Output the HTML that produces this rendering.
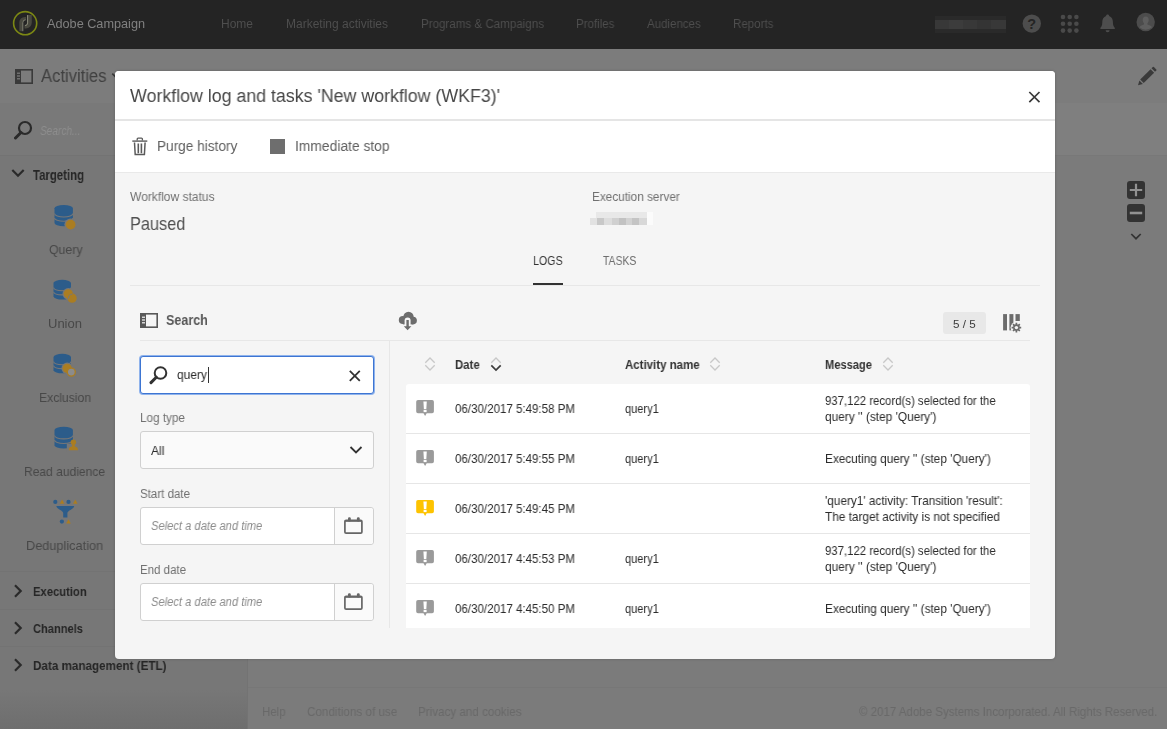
<!DOCTYPE html>
<html lang="en">
<head>
<meta charset="utf-8">
<title>Adobe Campaign</title>
<style>
*{box-sizing:border-box;margin:0;padding:0}
html,body{width:1167px;height:729px;overflow:hidden}
body{font-family:"Liberation Sans",sans-serif;background:#7d7d7d;position:relative;color:#323232}
.abs{position:absolute}
/* top nav */
#nav{position:absolute;left:0;top:0;width:1167px;height:49px;background:#242424}
/* background page */
#hdr{position:absolute;left:0;top:49px;width:1167px;height:54px;background:#7c7c7c}
#side{position:absolute;left:0;top:103px;width:248px;height:626px;background:linear-gradient(#777 0,#777 587px,#6e6e6e 626px);border-right:1px solid #737373}
#sidesearch{position:absolute;left:0;top:103px;width:247px;height:53px;background:#797979;border-bottom:1px solid #737373}
#main{position:absolute;left:248px;top:103px;width:919px;height:626px;background:#7b7b7b}
#mainbar{position:absolute;left:248px;top:103px;width:919px;height:53px;background:#7f7f7f;border-bottom:1px solid #787878}
#foot{position:absolute;left:248px;top:687px;width:919px;height:42px;background:#7b7b7b;border-top:1px solid #777}
/* modal */
#modal{position:absolute;left:115px;top:71px;width:940px;height:588px;background:#f5f5f5;border-radius:4px;overflow:hidden;box-shadow:0 0 3px rgba(0,0,0,.22)}
#mh{position:absolute;left:0;top:0;width:940px;height:50px;background:#fff;border-bottom:2px solid #e5e5e5}
#mt{position:absolute;left:0;top:50px;width:940px;height:52px;background:#fff;border-bottom:1px solid #e9e9e9}
.inp{position:absolute;background:#fff;border:1px solid #d0d0d0;border-radius:3px}
.x{position:absolute;white-space:nowrap;line-height:1;transform-origin:0 50%;will-change:transform}
</style>
</head>
<body>
<div id="hdr"></div>
<div id="side"></div>
<div id="sidesearch"></div>
<div id="main"></div>
<div id="mainbar"></div>
<div id="foot"></div>

<div id="nav">
  <svg class="abs" style="left:12px;top:10px" width="27" height="27" viewBox="12 10 27 27"><circle cx="25.150" cy="23.200" r="11.550" fill="none" stroke="#7c8814" stroke-width="1.600"/><path d="M19.300 31.200V22.500a5.500 5.500 0 0 1 5.500-5.500h1.200v2.800h-.8a2.700 2.700 0 0 0-2.700 2.700v8.700z" fill="#48483f"/><path d="M22.800 31.200V22.600a2.800 2.800 0 0 1 2.800-2.800" fill="none" stroke="#8a8a7a" stroke-width=".9"/><path d="M27 15.100h4.800v7.400a6 6 0 0 1-6 6h-1.300v-2.900h.6a2 2 0 0 0 1.900-2z" fill="#48483f"/><path d="M27.600 15.100v7.800a2.700 2.700 0 0 1-2.700 2.700" fill="none" stroke="#8a8a7a" stroke-width="1"/></svg>
  <div class="abs" style="left:935px;top:16px;width:71px;height:17px;background:#2a2a2a"></div>
  <div class="abs" style="left:935px;top:20px;width:71px;height:9px;background:#383838"></div>
  <div class="abs" style="left:949px;top:20px;width:14px;height:9px;background:#3c3c3c"></div>
  <div class="abs" style="left:977px;top:20px;width:14px;height:9px;background:#343434"></div>
  <svg class="abs" style="left:1022px;top:14px" width="20" height="20" viewBox="0 0 20 20"><circle cx="9.800" cy="9.600" r="9.200" fill="#4d4d4d"/><text x="9.800" y="14.800" font-family="Liberation Sans, sans-serif" font-weight="bold" font-size="14.500" text-anchor="middle" fill="#242424">?</text></svg>
  <svg class="abs" style="left:1060px;top:14px" width="20" height="20" viewBox="0 0 20 20" fill="#4a4a4a"><circle cx="3" cy="3" r="2.300"/><circle cx="9.700" cy="3" r="2.300"/><circle cx="16.400" cy="3" r="2.300"/><circle cx="3" cy="9.800" r="2.300"/><circle cx="9.700" cy="9.800" r="2.300"/><circle cx="16.400" cy="9.800" r="2.300"/><circle cx="3" cy="16.600" r="2.300"/><circle cx="9.700" cy="16.600" r="2.300"/><circle cx="16.400" cy="16.600" r="2.300"/></svg>
  <svg class="abs" style="left:1099px;top:14px" width="18" height="20" viewBox="0 0 18 20" fill="#4d4d4d"><path d="M8.600 .6c-.9 0-1.500.6-1.500 1.400C4.500 2.800 3.300 5.200 3.300 8c0 3.500-.9 4.800-1.900 5.800v1.200h14.400v-1.200c-1-1-1.900-2.300-1.900-5.800 0-2.800-1.200-5.200-3.800-6C10.100 1.200 9.500 .6 8.600 .6z"/><path d="M6.600 16.300a2 2 0 0 0 4 0z"/></svg>
  <svg class="abs" style="left:1136px;top:12px" width="20" height="20" viewBox="0 0 20 20"><circle cx="9.700" cy="10" r="9.200" fill="#4c4c4c"/><path d="M9.700 4.500c2 0 3 1.500 3 3.500 0 1.500-.6 2.600-1.300 3.300v1.200c1.800.5 3.800 1.300 4.600 2.800a9.200 9.200 0 0 1-12.600 0c.8-1.500 2.800-2.300 4.600-2.800v-1.200C7.300 10.600 6.700 9.500 6.700 8c0-2 1-3.500 3-3.500z" fill="#5e5e5e"/></svg>
  <div class="x" style="left:47.0px;top:18.0px;font-size:12.7px;color:#808080;transform:scaleX(0.9995)">Adobe Campaign</div>
  <div class="x" style="left:221.3px;top:18.0px;font-size:12px;color:#4e4e4e;transform:scaleX(0.9995)">Home</div>
  <div class="x" style="left:286.1px;top:18.0px;font-size:12px;color:#4e4e4e;transform:scaleX(0.9976)">Marketing activities</div>
  <div class="x" style="left:420.6px;top:18.0px;font-size:12px;color:#4e4e4e;transform:scaleX(0.9655)">Programs &amp; Campaigns</div>
  <div class="x" style="left:576.2px;top:18.0px;font-size:12px;color:#4e4e4e;transform:scaleX(0.9596)">Profiles</div>
  <div class="x" style="left:646.8px;top:18.0px;font-size:12px;color:#4e4e4e;transform:scaleX(0.9599)">Audiences</div>
  <div class="x" style="left:733.2px;top:18.0px;font-size:12px;color:#4e4e4e;transform:scaleX(0.9612)">Reports</div>
</div>

<!-- background left panel -->
<svg class="abs" style="left:15px;top:68.500px" width="18" height="15" viewBox="0 0 18 15"><rect x=".8" y=".8" width="16.400" height="13.400" fill="none" stroke="#3a3a3a" stroke-width="1.600"/><rect x="1" y="1" width="5" height="13" fill="#3a3a3a"/><rect x="2" y="3.600" width="3" height="1.200" fill="#7e7e7e"/><rect x="2" y="6.400" width="3" height="1.200" fill="#7e7e7e"/><rect x="2" y="9.200" width="3" height="1.200" fill="#7e7e7e"/></svg>
<svg class="abs" style="left:1137px;top:66px" width="20" height="20" viewBox="1137 66 20 20" fill="#3a3a3a"><path d="M1138 85.300l1.400-4.800 3.400 3.400z"/><path d="M1140.200 79.600l10.400-10.400 3.500 3.500-10.400 10.400z"/><path d="M1151.500 68.300l1.300-1.300a.8.800 0 0 1 1.100 0l2.400 2.400a.8.800 0 0 1 0 1.100l-1.300 1.300z"/></svg>
<svg class="abs" style="left:14px;top:120px" width="20" height="20" viewBox="0 0 20 20"><circle cx="11" cy="8" r="6" fill="none" stroke="#2a2a2a" stroke-width="2.200"/><path d="M7 12.500L1.500 18" stroke="#2a2a2a" stroke-width="3" stroke-linecap="round"/></svg>

<!--SIDEICONS--><svg class="abs" style="left:0;top:0" width="248" height="729" viewBox="0 0 248 729"><path d="M54.5 208.3a9.2 3.4 0 0 1 18.4 0v14.6a9.2 3.4 0 0 1 -18.4 0z" fill="#2c5c8a"/><path d="M54.5 213.6a9.2 3.4 0 0 0 18.4 0" fill="none" stroke="#777777" stroke-width="1.1"/><path d="M54.5 217.9a9.2 3.4 0 0 0 18.4 0" fill="none" stroke="#777777" stroke-width="1.1"/><circle cx="70.6" cy="224.6" r="6.2" fill="#777777"/><circle cx="70.600" cy="224.600" r="4.900" fill="#aa7d22"/><path d="M53.5 282.8a8.8 3.4 0 0 1 17.5 0v13.7a8.8 3.4 0 0 1 -17.5 0z" fill="#2c5c8a"/><path d="M53.5 287.7a8.8 3.4 0 0 0 17.5 0" fill="none" stroke="#777777" stroke-width="1.1"/><path d="M53.5 291.8a8.8 3.4 0 0 0 17.5 0" fill="none" stroke="#777777" stroke-width="1.1"/><circle cx="68.300" cy="293.800" r="5.800" fill="#777777"/><circle cx="72.100" cy="298.200" r="5.800" fill="#777777"/><circle cx="68.300" cy="293.800" r="4.600" fill="#aa7d22"/><circle cx="72.100" cy="298.200" r="4.600" fill="#aa7d22"/><path d="M68.500 298.500a4.500 4.500 0 0 1 4-4.500" fill="none" stroke="#777777" stroke-width="1"/><path d="M53.5 356.9a8.8 3.4 0 0 1 17.5 0v13.4a8.8 3.4 0 0 1 -17.5 0z" fill="#2c5c8a"/><path d="M53.5 361.7a8.8 3.4 0 0 0 17.5 0" fill="none" stroke="#777777" stroke-width="1.1"/><path d="M53.5 365.7a8.8 3.4 0 0 0 17.5 0" fill="none" stroke="#777777" stroke-width="1.1"/><circle cx="67.200" cy="368.300" r="5.800" fill="#777777"/><circle cx="71.300" cy="372.100" r="5.800" fill="#777777"/><circle cx="67.200" cy="368.300" r="4.600" fill="#aa7d22"/><circle cx="71.300" cy="372.100" r="4" fill="#8c8c8c" stroke="#aa7d22" stroke-width="1.300"/><path d="M54.5 430.1a9.2 3.4 0 0 1 18.4 0v15.1a9.2 3.4 0 0 1 -18.4 0z" fill="#2c5c8a"/><path d="M54.5 435.5a9.2 3.4 0 0 0 18.4 0" fill="none" stroke="#777777" stroke-width="1.1"/><path d="M54.5 440.1a9.2 3.4 0 0 0 18.4 0" fill="none" stroke="#777777" stroke-width="1.1"/><path d="M66.800 452v-8.500h12.700v8.500z" fill="#777777"/><circle cx="73.400" cy="442.300" r="2.700" fill="#aa7d22"/><path d="M72.300 444h2.200l.5 2.600c2 .3 3 1.400 3 3.700h-9.200c0-2.300 1-3.400 3-3.700z" fill="#aa7d22"/><circle cx="55.300" cy="501.900" r="2.100" fill="#2c5c8a"/><path d="M59.8 503.7L62.1 499.6L64.4 503.7z" fill="#aa7d22"/><circle cx="68.500" cy="501.900" r="2.100" fill="#2c5c8a"/><path d="M73.0 503.7L75.3 499.6L77.6 503.7z" fill="#aa7d22"/><path d="M56.400 506h17.800c0 3-6.800 4.500-6.800 7v4.500h-4.200v-4.500c0-2.500-6.800-4-6.800-7z" fill="#2c5c8a"/><circle cx="61.900" cy="521.600" r="2.100" fill="#2c5c8a"/><path d="M66.2 523.4L68.5 519.3L70.8 523.4z" fill="#aa7d22"/></svg><!--/SIDEICONS-->
<svg class="abs" style="left:11px;top:168px" width="14" height="10" viewBox="0 0 14 10"><path d="M1.300 2l5.700 5.700L12.700 2" fill="none" stroke="#2a2a2a" stroke-width="2.200"/></svg>
<div class="abs" style="left:0;top:571px;width:248px;height:1px;background:#737373"></div>
<div class="abs" style="left:0;top:609px;width:248px;height:1px;background:#737373"></div>
<div class="abs" style="left:0;top:646px;width:248px;height:1px;background:#737373"></div>
<svg class="abs" style="left:13px;top:584px" width="10" height="14" viewBox="0 0 10 14"><path d="M2 1.300l5.700 5.700L2 12.700" fill="none" stroke="#2a2a2a" stroke-width="2.200"/></svg>
<svg class="abs" style="left:13px;top:621px" width="10" height="14" viewBox="0 0 10 14"><path d="M2 1.300l5.700 5.700L2 12.700" fill="none" stroke="#2a2a2a" stroke-width="2.200"/></svg>
<svg class="abs" style="left:13px;top:658px" width="10" height="14" viewBox="0 0 10 14"><path d="M2 1.300l5.700 5.700L2 12.700" fill="none" stroke="#2a2a2a" stroke-width="2.200"/></svg>


<!-- zoom buttons -->
<svg class="abs" style="left:1126px;top:180px" width="20" height="68" viewBox="0 0 20 68"><rect x="1" y="1" width="18" height="18" rx="3" fill="#333"/><path d="M10 3.800v12.400M3.800 10h12.400" stroke="#929292" stroke-width="2.200"/><rect x="1" y="24" width="18" height="18" rx="3" fill="#333"/><path d="M3.800 33h12.400" stroke="#929292" stroke-width="2.600"/><path d="M5.300 54l4.700 4.700 4.700-4.700" fill="none" stroke="#333" stroke-width="1.700"/></svg>

<svg class="abs" style="left:110px;top:70px" width="14" height="12" viewBox="110 70 14 12"><path d="M112.300 73.600l4.500 4.500 4.500-4.500" fill="none" stroke="#3a3a3a" stroke-width="1.700"/></svg>
<div class="x" style="left:41.2px;top:68.0px;font-size:17.5px;color:#404040;transform:scaleX(0.9486)">Activities</div>
<div class="x" style="left:499.5px;top:69.0px;font-size:18px;color:#404040;transform:scaleX(1.0280)">New workflow (WKF3)</div>
<div class="x" style="left:40.2px;top:125.0px;font-size:12.5px;color:#8e8e8e;font-style:italic;transform:scaleX(0.8075)">Search...</div>
<div class="x" style="left:32.5px;top:169.0px;font-size:13.8px;color:#262626;font-weight:bold;transform:scaleX(0.8247)">Targeting</div>
<div class="x" style="left:48.7px;top:243.0px;font-size:13px;color:#484848;transform:scaleX(0.9490)">Query</div>
<div class="x" style="left:47.7px;top:317.0px;font-size:13px;color:#484848;transform:scaleX(0.9921)">Union</div>
<div class="x" style="left:38.7px;top:391.0px;font-size:13px;color:#484848;transform:scaleX(0.9346)">Exclusion</div>
<div class="x" style="left:24.3px;top:465.0px;font-size:13px;color:#484848;transform:scaleX(0.9260)">Read audience</div>
<div class="x" style="left:26.2px;top:539.0px;font-size:13px;color:#484848;transform:scaleX(0.9799)">Deduplication</div>
<div class="x" style="left:32.5px;top:585.0px;font-size:13.6px;color:#262626;font-weight:bold;transform:scaleX(0.8266)">Execution</div>
<div class="x" style="left:32.5px;top:622.0px;font-size:13.6px;color:#262626;font-weight:bold;transform:scaleX(0.8172)">Channels</div>
<div class="x" style="left:32.5px;top:659.0px;font-size:13.6px;color:#262626;font-weight:bold;transform:scaleX(0.8579)">Data management (ETL)</div>
<div class="x" style="left:262.4px;top:706.0px;font-size:12.8px;color:#696969;transform:scaleX(0.8964)">Help</div>
<div class="x" style="left:307.0px;top:706.0px;font-size:12.8px;color:#696969;transform:scaleX(0.9131)">Conditions of use</div>
<div class="x" style="left:417.7px;top:706.0px;font-size:12.8px;color:#696969;transform:scaleX(0.9094)">Privacy and cookies</div>
<div class="x" style="left:859.2px;top:706.0px;font-size:12.8px;color:#696969;transform:scaleX(0.8994)">© 2017 Adobe Systems Incorporated. All Rights Reserved.</div>

<div id="modal">
  <div id="mh"></div>
  <div id="mt"></div>
  
<!--MODAL-->
  <!-- toolbar -->
  <svg class="abs" style="left:17px;top:66px" width="16" height="19" viewBox="0 0 16 19"><rect x=".3" y="3.400" width="15" height="1.400" fill="#5a5a5a"/><path d="M5.200 3.600V2a.9.900 0 0 1 .9-.9h3.400a.9.900 0 0 1 .9.900v1.600" fill="none" stroke="#5a5a5a" stroke-width="1.300"/><path d="M2.500 5.500l.7 12h9.200l.7-12" fill="none" stroke="#5a5a5a" stroke-width="1.500"/><path d="M6.300 6.500v9.700M9.400 6.500v9.700" stroke="#5a5a5a" stroke-width="1.600"/></svg>
  <div class="abs" style="left:155px;top:68px;width:15px;height:15px;background:#6e6e6e"></div>

  <!-- status -->
  <div class="abs" style="left:481px;top:141px;width:51px;height:6px;background:#e8e8e8"></div>
  <div class="abs" style="left:475.4px;top:146.500px;width:6.2px;height:7.500px;background:#e2e2e2"></div>
  <div class="abs" style="left:481.6px;top:146.500px;width:7.7px;height:7.500px;background:#c8c8c8"></div>
  <div class="abs" style="left:489.3px;top:146.500px;width:7.7px;height:7.500px;background:#dddddd"></div>
  <div class="abs" style="left:497.0px;top:146.500px;width:6.5px;height:7.500px;background:#d0d0d0"></div>
  <div class="abs" style="left:503.5px;top:146.500px;width:7.0px;height:7.500px;background:#c2c2c2"></div>
  <div class="abs" style="left:510.5px;top:146.500px;width:6.9px;height:7.500px;background:#d2d2d2"></div>
  <div class="abs" style="left:517.4px;top:146.500px;width:7.0px;height:7.500px;background:#c4c4c4"></div>
  <div class="abs" style="left:524.4px;top:146.500px;width:7.6px;height:7.500px;background:#d8d8d8"></div>
  <div class="abs" style="left:532.0px;top:146.500px;width:5.5px;height:7.500px;background:#fbfbfb"></div>
  <div class="abs" style="left:532px;top:141px;width:5.500px;height:6px;background:#fbfbfb"></div>

  <!-- tabs -->
  <div class="abs" style="left:15px;top:214px;width:910px;height:1px;background:#e7e7e7"></div>
  <div class="abs" style="left:418px;top:212px;width:30px;height:2px;background:#323232"></div>

  <!-- left search panel -->
  <svg class="abs" style="left:25px;top:242px" width="18" height="15" viewBox="0 0 18 15"><rect x=".8" y=".8" width="16.400" height="13.400" fill="none" stroke="#585858" stroke-width="1.600"/><rect x="1" y="1" width="5" height="13" fill="#585858"/><rect x="2" y="3.600" width="3" height="1.200" fill="#f5f5f5"/><rect x="2" y="6.400" width="3" height="1.200" fill="#f5f5f5"/><rect x="2" y="9.200" width="3" height="1.200" fill="#f5f5f5"/></svg>
  <div class="abs" style="left:25px;top:269px;width:890px;height:1px;background:#e7e7e7"></div>
  <div class="abs" style="left:274px;top:270px;width:1px;height:287px;background:#e7e7e7"></div>

  <div class="inp" style="left:25px;top:285px;width:234px;height:38px;border:1px solid #3d75d2;border-radius:3px;box-shadow:0 0 0 1px #8fb3ec"></div>
  <svg class="abs" style="left:34px;top:294px" width="20" height="20" viewBox="0 0 20 20"><circle cx="11.500" cy="8" r="5.800" fill="none" stroke="#323232" stroke-width="2"/><path d="M7.300 12.300L2 17.600" stroke="#323232" stroke-width="3" stroke-linecap="round"/></svg>
  <div class="abs" style="left:93px;top:296px;width:1px;height:16px;background:#323232"></div>
  <svg class="abs" style="left:233.500px;top:298.500px" width="12" height="12" viewBox="0 0 12 12"><path d="M.8.800l10 10M10.800.800l-10 10" stroke="#323232" stroke-width="1.800"/></svg>

  <div class="inp" style="left:25px;top:360px;width:234px;height:38px;background:#fafafa"></div>
  <svg class="abs" style="left:234px;top:374px" width="14" height="10" viewBox="0 0 14 10"><path d="M1.500 2l5.500 5.500L12.500 2" fill="none" stroke="#323232" stroke-width="1.800"/></svg>

  <div class="inp" style="left:25px;top:436px;width:234px;height:38px"></div>
  <div class="abs" style="left:219px;top:437px;width:39px;height:36px;background:#fafafa;border-left:1px solid #d0d0d0;border-radius:0 3px 3px 0"></div>
  <svg class="abs" style="left:229px;top:446px" width="19" height="17" viewBox="0 0 19 17"><rect x=".9" y="3.300" width="17" height="12.800" rx="1.200" fill="none" stroke="#666" stroke-width="1.700"/><rect x=".9" y="3" width="17" height="1.800" fill="#666"/><rect x="4" y=".3" width="2.800" height="4.200" rx="1.200" fill="#666"/><rect x="12.900" y=".3" width="2.800" height="4.200" rx="1.200" fill="#666"/></svg>

  <div class="inp" style="left:25px;top:512px;width:234px;height:38px"></div>
  <div class="abs" style="left:219px;top:513px;width:39px;height:36px;background:#fafafa;border-left:1px solid #d0d0d0;border-radius:0 3px 3px 0"></div>
  <svg class="abs" style="left:229px;top:522px" width="19" height="17" viewBox="0 0 19 17"><rect x=".9" y="3.300" width="17" height="12.800" rx="1.200" fill="none" stroke="#666" stroke-width="1.700"/><rect x=".9" y="3" width="17" height="1.800" fill="#666"/><rect x="4" y=".3" width="2.800" height="4.200" rx="1.200" fill="#666"/><rect x="12.900" y=".3" width="2.800" height="4.200" rx="1.200" fill="#666"/></svg>

  <!-- list header -->
  <svg class="abs" style="left:283px;top:240px" width="20" height="20" viewBox="0 0 20 20"><g fill="#6c6c6c"><circle cx="4.900" cy="9" r="4.100"/><circle cx="10.500" cy="6" r="5.200"/><circle cx="15.100" cy="9.600" r="3.800"/><rect x="4.900" y="8" width="10.200" height="5.400"/></g><path d="M6.600 14.500V9.600a3 3 0 0 1 6 0v4.900z" fill="#f5f5f5"/><path d="M8.400 8.900h2.400v6.300h2.600L9.600 19.200 5.800 15.200h2.600z" fill="#6c6c6c"/></svg>
  <div class="abs" style="left:828px;top:241px;width:43px;height:22px;background:#e8e8e8;border-radius:3px"></div>
  <svg class="abs" style="left:888px;top:243px" width="20" height="20" viewBox="0 0 20 20"><g fill="#6c6c6c"><rect x=".1" y=".1" width="3.900" height="16.300"/><rect x="6.400" y=".1" width="4" height="16.300"/><rect x="12.500" y=".1" width="4.300" height="6.900"/></g><circle cx="13.4" cy="13.6" r="5.800" fill="#f5f5f5"/><circle cx="13.4" cy="13.6" r="3.300" fill="#6c6c6c"/><path d="M15.90 13.60L18.20 13.60M15.17 15.37L16.79 16.99M13.40 16.10L13.40 18.40M11.63 15.37L10.01 16.99M10.90 13.60L8.60 13.60M11.63 11.83L10.01 10.21M13.40 11.10L13.40 8.80M15.17 11.83L16.79 10.21" stroke="#6c6c6c" stroke-width="1.700"/><circle cx="13.4" cy="13.6" r="1.700" fill="#f5f5f5"/></svg>

  <!-- table header -->
  <svg class="abs" style="left:308.8px;top:285.3px" width="12" height="16" viewBox="0 0 12 16"><path d="M1.300 6.700L6 2l4.700 4.700" fill="none" stroke="#c8c8c8" stroke-width="1.300"/><path d="M1.300 9.300L6 14l4.700-4.700" fill="none" stroke="#c8c8c8" stroke-width="1.3"/></svg> <svg class="abs" style="left:374.9px;top:285.3px" width="12" height="16" viewBox="0 0 12 16"><path d="M1.300 6.700L6 2l4.700 4.700" fill="none" stroke="#c8c8c8" stroke-width="1.300"/><path d="M1.300 9.300L6 14l4.700-4.700" fill="none" stroke="#3c3c3c" stroke-width="1.7"/></svg> <svg class="abs" style="left:594.4px;top:285.3px" width="12" height="16" viewBox="0 0 12 16"><path d="M1.300 6.700L6 2l4.700 4.700" fill="none" stroke="#c8c8c8" stroke-width="1.300"/><path d="M1.300 9.300L6 14l4.700-4.700" fill="none" stroke="#c8c8c8" stroke-width="1.3"/></svg> <svg class="abs" style="left:766.7px;top:285.3px" width="12" height="16" viewBox="0 0 12 16"><path d="M1.300 6.700L6 2l4.700 4.700" fill="none" stroke="#c8c8c8" stroke-width="1.300"/><path d="M1.300 9.300L6 14l4.700-4.700" fill="none" stroke="#c8c8c8" stroke-width="1.3"/></svg>

  <!-- rows -->
  <div class="abs" style="left:291px;top:313px;width:624px;height:244px;background:#fff;border-radius:3px 3px 0 0"></div>
  <div class="abs" style="left:291px;top:362px;width:624px;height:1px;background:#e6e6e6"></div>
  <div class="abs" style="left:291px;top:412px;width:624px;height:1px;background:#e6e6e6"></div>
  <div class="abs" style="left:291px;top:462px;width:624px;height:1px;background:#e6e6e6"></div>
  <div class="abs" style="left:291px;top:512px;width:624px;height:1px;background:#e6e6e6"></div>
  <svg class="abs" style="left:301px;top:328.9px" width="19" height="17" viewBox="0 0 19 17"><path d="M2 0h14.100a1.800 1.800 0 0 1 1.800 1.800v9.600a1.800 1.800 0 0 1-1.800 1.800h-5.400L9.100 16 7.500 13.200H2a1.800 1.800 0 0 1-1.800-1.800V1.800a1.800 1.800 0 0 1 1.800-1.800z" fill="#9a9a9a"/><path d="M7.400 1.600h3.400l-.5 7.400h-2.400z" fill="#fff"/><rect x="7.600" y="9.800" width="3" height="2.300" fill="#fff"/></svg> <svg class="abs" style="left:301px;top:378.9px" width="19" height="17" viewBox="0 0 19 17"><path d="M2 0h14.100a1.800 1.800 0 0 1 1.800 1.800v9.600a1.800 1.800 0 0 1-1.800 1.800h-5.400L9.100 16 7.500 13.200H2a1.800 1.800 0 0 1-1.800-1.800V1.800a1.800 1.800 0 0 1 1.800-1.800z" fill="#9a9a9a"/><path d="M7.400 1.600h3.400l-.5 7.400h-2.400z" fill="#fff"/><rect x="7.600" y="9.800" width="3" height="2.300" fill="#fff"/></svg> <svg class="abs" style="left:301px;top:428.9px" width="19" height="17" viewBox="0 0 19 17"><path d="M2 0h14.100a1.800 1.800 0 0 1 1.800 1.800v9.600a1.800 1.800 0 0 1-1.800 1.800h-5.400L9.100 16 7.500 13.200H2a1.800 1.800 0 0 1-1.800-1.800V1.800a1.800 1.800 0 0 1 1.800-1.800z" fill="#fdc300"/><path d="M7.400 1.600h3.400l-.5 7.400h-2.400z" fill="#fff"/><rect x="7.600" y="9.800" width="3" height="2.300" fill="#fff"/></svg> <svg class="abs" style="left:301px;top:478.9px" width="19" height="17" viewBox="0 0 19 17"><path d="M2 0h14.100a1.800 1.800 0 0 1 1.800 1.800v9.600a1.800 1.800 0 0 1-1.800 1.800h-5.400L9.100 16 7.500 13.200H2a1.800 1.800 0 0 1-1.800-1.800V1.800a1.800 1.800 0 0 1 1.800-1.800z" fill="#9a9a9a"/><path d="M7.400 1.600h3.400l-.5 7.400h-2.400z" fill="#fff"/><rect x="7.600" y="9.800" width="3" height="2.300" fill="#fff"/></svg> <svg class="abs" style="left:301px;top:528.9px" width="19" height="17" viewBox="0 0 19 17"><path d="M2 0h14.100a1.800 1.800 0 0 1 1.800 1.800v9.600a1.800 1.800 0 0 1-1.800 1.800h-5.400L9.100 16 7.500 13.200H2a1.800 1.800 0 0 1-1.800-1.800V1.800a1.800 1.800 0 0 1 1.800-1.800z" fill="#9a9a9a"/><path d="M7.400 1.600h3.400l-.5 7.400h-2.400z" fill="#fff"/><rect x="7.600" y="9.800" width="3" height="2.300" fill="#fff"/></svg>

  <!-- close -->
  <svg class="abs" style="left:913px;top:19.500px" width="13" height="13" viewBox="0 0 13 13"><path d="M1.300 1l10.200 10.200M11.500 1L1.300 11.200" stroke="#3a3a3a" stroke-width="1.700"/></svg>
  <div class="x" style="left:15.0px;top:16.0px;font-size:18px;color:#464646;transform:scaleX(0.9876)">Workflow log and tasks 'New workflow (WKF3)'</div>
  <div class="x" style="left:42.2px;top:68.0px;font-size:14.7px;color:#606060;transform:scaleX(0.9278)">Purge history</div>
  <div class="x" style="left:180.0px;top:68.0px;font-size:14.7px;color:#606060;transform:scaleX(0.9420)">Immediate stop</div>
  <div class="x" style="left:15.0px;top:120.0px;font-size:12.3px;color:#707070;transform:scaleX(0.9773)">Workflow status</div>
  <div class="x" style="left:15.2px;top:144.0px;font-size:18.4px;color:#505050;transform:scaleX(0.8866)">Paused</div>
  <div class="x" style="left:477.3px;top:120.0px;font-size:12.3px;color:#707070;transform:scaleX(0.9586)">Execution server</div>
  <div class="x" style="left:418.4px;top:183.0px;font-size:13px;color:#323232;transform:scaleX(0.8194)">LOGS</div>
  <div class="x" style="left:488.2px;top:183.0px;font-size:13px;color:#6e6e6e;transform:scaleX(0.7991)">TASKS</div>
  <div class="x" style="left:50.7px;top:241.0px;font-size:15px;color:#585858;font-weight:bold;transform:scaleX(0.8372)">Search</div>
  <div class="x" style="left:61.9px;top:297.0px;font-size:13px;color:#2b2b2b;transform:scaleX(0.9191)">query</div>
  <div class="x" style="left:25.0px;top:341.0px;font-size:12.3px;color:#707070;transform:scaleX(0.9536)">Log type</div>
  <div class="x" style="left:35.8px;top:374.0px;font-size:12.8px;color:#2b2b2b;transform:scaleX(0.9414)">All</div>
  <div class="x" style="left:25.0px;top:417.0px;font-size:12.3px;color:#707070;transform:scaleX(0.9376)">Start date</div>
  <div class="x" style="left:35.7px;top:449.0px;font-size:12.3px;color:#8c8c8c;font-style:italic;transform:scaleX(0.9095)">Select a date and time</div>
  <div class="x" style="left:25.0px;top:493.0px;font-size:12.3px;color:#707070;transform:scaleX(0.9343)">End date</div>
  <div class="x" style="left:35.7px;top:525.0px;font-size:12.3px;color:#8c8c8c;font-style:italic;transform:scaleX(0.9095)">Select a date and time</div>
  <div class="x" style="left:838.4px;top:248.0px;font-size:11.5px;color:#3a3a3a;transform:scaleX(1.0138)">5 / 5</div>
  <div class="x" style="left:340.4px;top:288.0px;font-size:12.2px;color:#323232;font-weight:bold;transform:scaleX(0.9348)">Date</div>
  <div class="x" style="left:509.9px;top:288.0px;font-size:12.2px;color:#323232;font-weight:bold;transform:scaleX(0.9413)">Activity name</div>
  <div class="x" style="left:709.8px;top:288.0px;font-size:12.2px;color:#323232;font-weight:bold;transform:scaleX(0.9107)">Message</div>
  <div class="x" style="left:339.8px;top:332.0px;font-size:12.2px;color:#2b2b2b;transform:scaleX(0.9470)">06/30/2017 5:49:58 PM</div>
  <div class="x" style="left:339.8px;top:382.0px;font-size:12.2px;color:#2b2b2b;transform:scaleX(0.9470)">06/30/2017 5:49:55 PM</div>
  <div class="x" style="left:339.8px;top:432.0px;font-size:12.2px;color:#2b2b2b;transform:scaleX(0.9470)">06/30/2017 5:49:45 PM</div>
  <div class="x" style="left:339.8px;top:482.0px;font-size:12.2px;color:#2b2b2b;transform:scaleX(0.9470)">06/30/2017 4:45:53 PM</div>
  <div class="x" style="left:339.8px;top:532.0px;font-size:12.2px;color:#2b2b2b;transform:scaleX(0.9470)">06/30/2017 4:45:50 PM</div>
  <div class="x" style="left:509.9px;top:332.0px;font-size:12.2px;color:#2b2b2b;transform:scaleX(0.9070)">query1</div>
  <div class="x" style="left:509.9px;top:382.0px;font-size:12.2px;color:#2b2b2b;transform:scaleX(0.9070)">query1</div>
  <div class="x" style="left:509.9px;top:482.0px;font-size:12.2px;color:#2b2b2b;transform:scaleX(0.9070)">query1</div>
  <div class="x" style="left:509.9px;top:532.0px;font-size:12.2px;color:#2b2b2b;transform:scaleX(0.9070)">query1</div>
  <div class="x" style="left:709.8px;top:324.0px;font-size:12.2px;color:#2b2b2b;transform:scaleX(0.9332)">937,122 record(s) selected for the</div>
  <div class="x" style="left:709.8px;top:340.0px;font-size:12.2px;color:#2b2b2b;transform:scaleX(0.9747)">query '' (step 'Query')</div>
  <div class="x" style="left:709.8px;top:382.0px;font-size:12.2px;color:#2b2b2b;transform:scaleX(0.9679)">Executing query '' (step 'Query')</div>
  <div class="x" style="left:709.8px;top:424.0px;font-size:12.2px;color:#2b2b2b;transform:scaleX(0.9690)">'query1' activity: Transition 'result':</div>
  <div class="x" style="left:709.8px;top:440.0px;font-size:12.2px;color:#2b2b2b;transform:scaleX(0.9700)">The target activity is not specified</div>
  <div class="x" style="left:709.8px;top:474.0px;font-size:12.2px;color:#2b2b2b;transform:scaleX(0.9332)">937,122 record(s) selected for the</div>
  <div class="x" style="left:709.8px;top:490.0px;font-size:12.2px;color:#2b2b2b;transform:scaleX(0.9747)">query '' (step 'Query')</div>
  <div class="x" style="left:709.8px;top:532.0px;font-size:12.2px;color:#2b2b2b;transform:scaleX(0.9679)">Executing query '' (step 'Query')</div>
<!--/MODAL-->
</div>
</body>
</html>
